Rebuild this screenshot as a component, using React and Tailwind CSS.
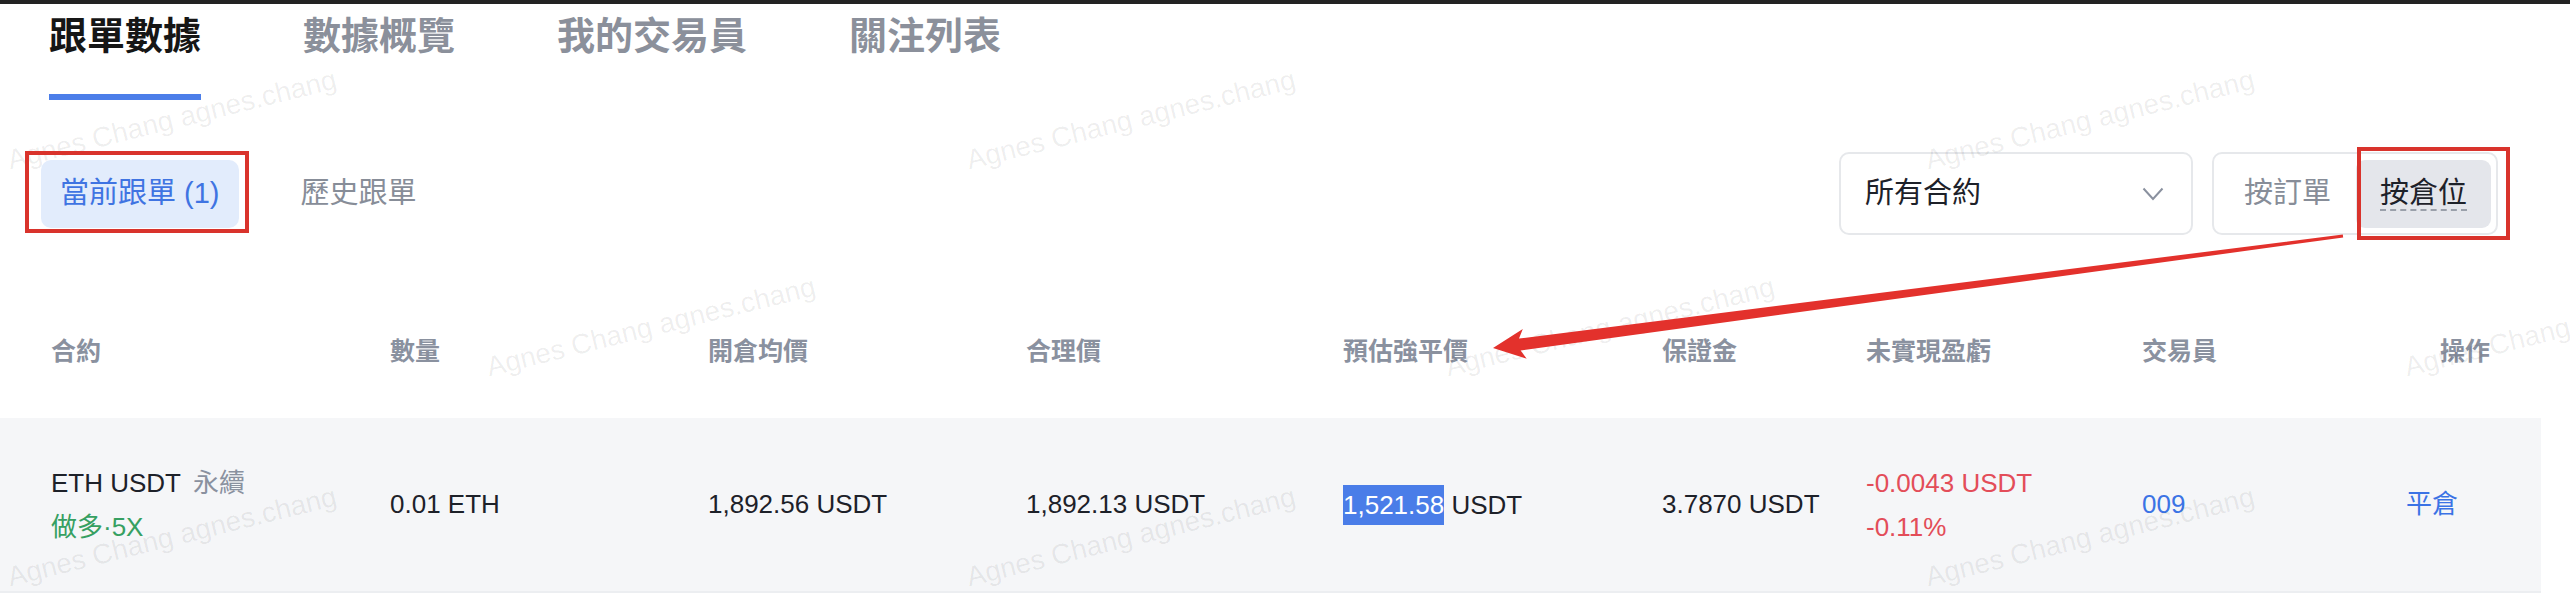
import React from "react";

const TABS = ["跟單數據", "數據概覽", "我的交易員", "關注列表"];

const COLS =
  "grid grid-cols-[339px_318px_318px_317px_319px_204px_276px_264px_84px]";

const WM = [
  "left-[172px] top-[120px]",
  "left-[1131px] top-[120px]",
  "left-[2090px] top-[120px]",
  "left-[651px] top-[327px]",
  "left-[1610px] top-[327px]",
  "left-[2569px] top-[327px]",
  "left-[172px] top-[537px]",
  "left-[1131px] top-[537px]",
  "left-[2090px] top-[537px]",
];

const HEADERS = [
  "合約",
  "數量",
  "開倉均價",
  "合理價",
  "預估強平價",
  "保證金",
  "未實現盈虧",
  "交易員",
];

export default function App() {
  return (
    <div className="relative h-[612px] w-[2570px] overflow-hidden bg-white font-['Liberation_Sans','Noto_Sans_CJK_TC',sans-serif]">
      <div className="h-[4px] bg-[#232323]" />

      {/* main tabs */}
      <nav className="flex gap-[102px] pl-[49px] pt-[9px]">
        {TABS.map((t, i) => (
          <div key={t} className="flex flex-col">
            <span
              className={
                i === 0
                  ? "text-[38px] font-bold leading-[46px] text-[#161616]"
                  : "text-[38px] font-bold leading-[46px] text-[#8b909b]"
              }
            >
              {t}
            </span>
            {i === 0 && <div className="mt-[35px] h-[6px] bg-[#4c7ee9]" />}
          </div>
        ))}
      </nav>

      {/* sub tabs + filters */}
      <div className="mt-[52px] flex h-[83px] items-center justify-between pl-[41px] pr-[72px]">
        <div className="flex items-center gap-[43px]">
          <div className="flex h-[68px] items-center rounded-[10px] bg-[#e2ecfc] px-[19px] text-[29px] text-[#3f74e2]">
            當前跟單 (1)
          </div>
          <div className="flex h-[68px] items-center px-[19px] text-[29px] text-[#878d98]">
            歷史跟單
          </div>
        </div>
        <div className="flex items-center gap-[19px]">
          <div className="flex h-[83px] w-[354px] items-center justify-between rounded-[10px] border-2 border-[#e6e8eb] pl-[24px] pr-[27px]">
            <span className="text-[29px] text-[#1d2129]">所有合約</span>
            <svg width="22" height="14" viewBox="0 0 22 14">
              <path
                d="M1.5 1.5 L11 12 L20.5 1.5"
                fill="none"
                stroke="#8a919f"
                strokeWidth="2"
              />
            </svg>
          </div>
          <div className="flex h-[83px] w-[286px] items-center rounded-[10px] border-2 border-[#e6e8eb] p-[5px]">
            <div className="flex h-[68px] w-[137px] items-center justify-center text-[29px] text-[#878d98]">
              按訂單
            </div>
            <div className="flex h-[68px] w-[135px] items-center justify-center rounded-[9px] bg-[#e4e6eb]">
              <span className="border-b-2 border-dashed border-[#9aa0aa] text-[29px] leading-[32px] text-[#1d2129]">
                按倉位
              </span>
            </div>
          </div>
        </div>
      </div>

      {/* table header */}
      <div
        className={`${COLS} mt-[57px] h-[120px] w-[2541px] items-center px-[51px] text-[25px] font-semibold text-[#8a919f]`}
      >
        {HEADERS.map((h) => (
          <div key={h}>{h}</div>
        ))}
        <div className="text-right">操作</div>
      </div>

      {/* table row */}
      <div
        className={`${COLS} mt-[6px] h-[175px] w-[2541px] items-center border-b-2 border-[#eceef1] bg-[#f5f6f8] px-[51px] text-[26px] text-[#1d2129]`}
      >
        <div className="flex flex-col leading-[44px]">
          <div>
            ETH USDT<span className="ml-[12px] text-[#8a919f]">永續</span>
          </div>
          <div className="text-[#36a062]">做多·5X</div>
        </div>
        <div>0.01 ETH</div>
        <div>1,892.56 USDT</div>
        <div>1,892.13 USDT</div>
        <div>
          <span className="inline-block bg-[#4a7de8] leading-[40px] text-white">
            1,521.58
          </span>{" "}
          USDT
        </div>
        <div>3.7870 USDT</div>
        <div className="flex flex-col leading-[44px] text-[#e34d59]">
          <div>-0.0043 USDT</div>
          <div>-0.11%</div>
        </div>
        <div className="text-[#3b73e5]">009</div>
        <div className="text-[#3b73e5]">平倉</div>
      </div>

      {/* watermark */}
      <div className="pointer-events-none absolute inset-0">
        {WM.map((c) => (
          <span
            key={c}
            className={`absolute ${c} -translate-x-1/2 -translate-y-1/2 rotate-[-14deg] whitespace-nowrap text-[28px] text-black/[0.07]`}
          >
            Agnes Chang agnes.chang
          </span>
        ))}
      </div>

      {/* annotations */}
      <div className="pointer-events-none absolute left-[25px] top-[151px] h-[82px] w-[224px] border-4 border-[#d9332c]" />
      <div className="pointer-events-none absolute left-[2357px] top-[147px] h-[93px] w-[153px] border-4 border-[#d9332c]" />
      <svg
        className="pointer-events-none absolute left-0 top-0"
        width="2570"
        height="612"
        viewBox="0 0 2570 612"
      >
        <polygon
          fill="#e3312c"
          points="1493,348 1522.8,328.9 1519.0,338.6 2342.8,234.5 2343.2,237.5 1520.6,350.4 1526.7,358.7"
        />
      </svg>
    </div>
  );
}
